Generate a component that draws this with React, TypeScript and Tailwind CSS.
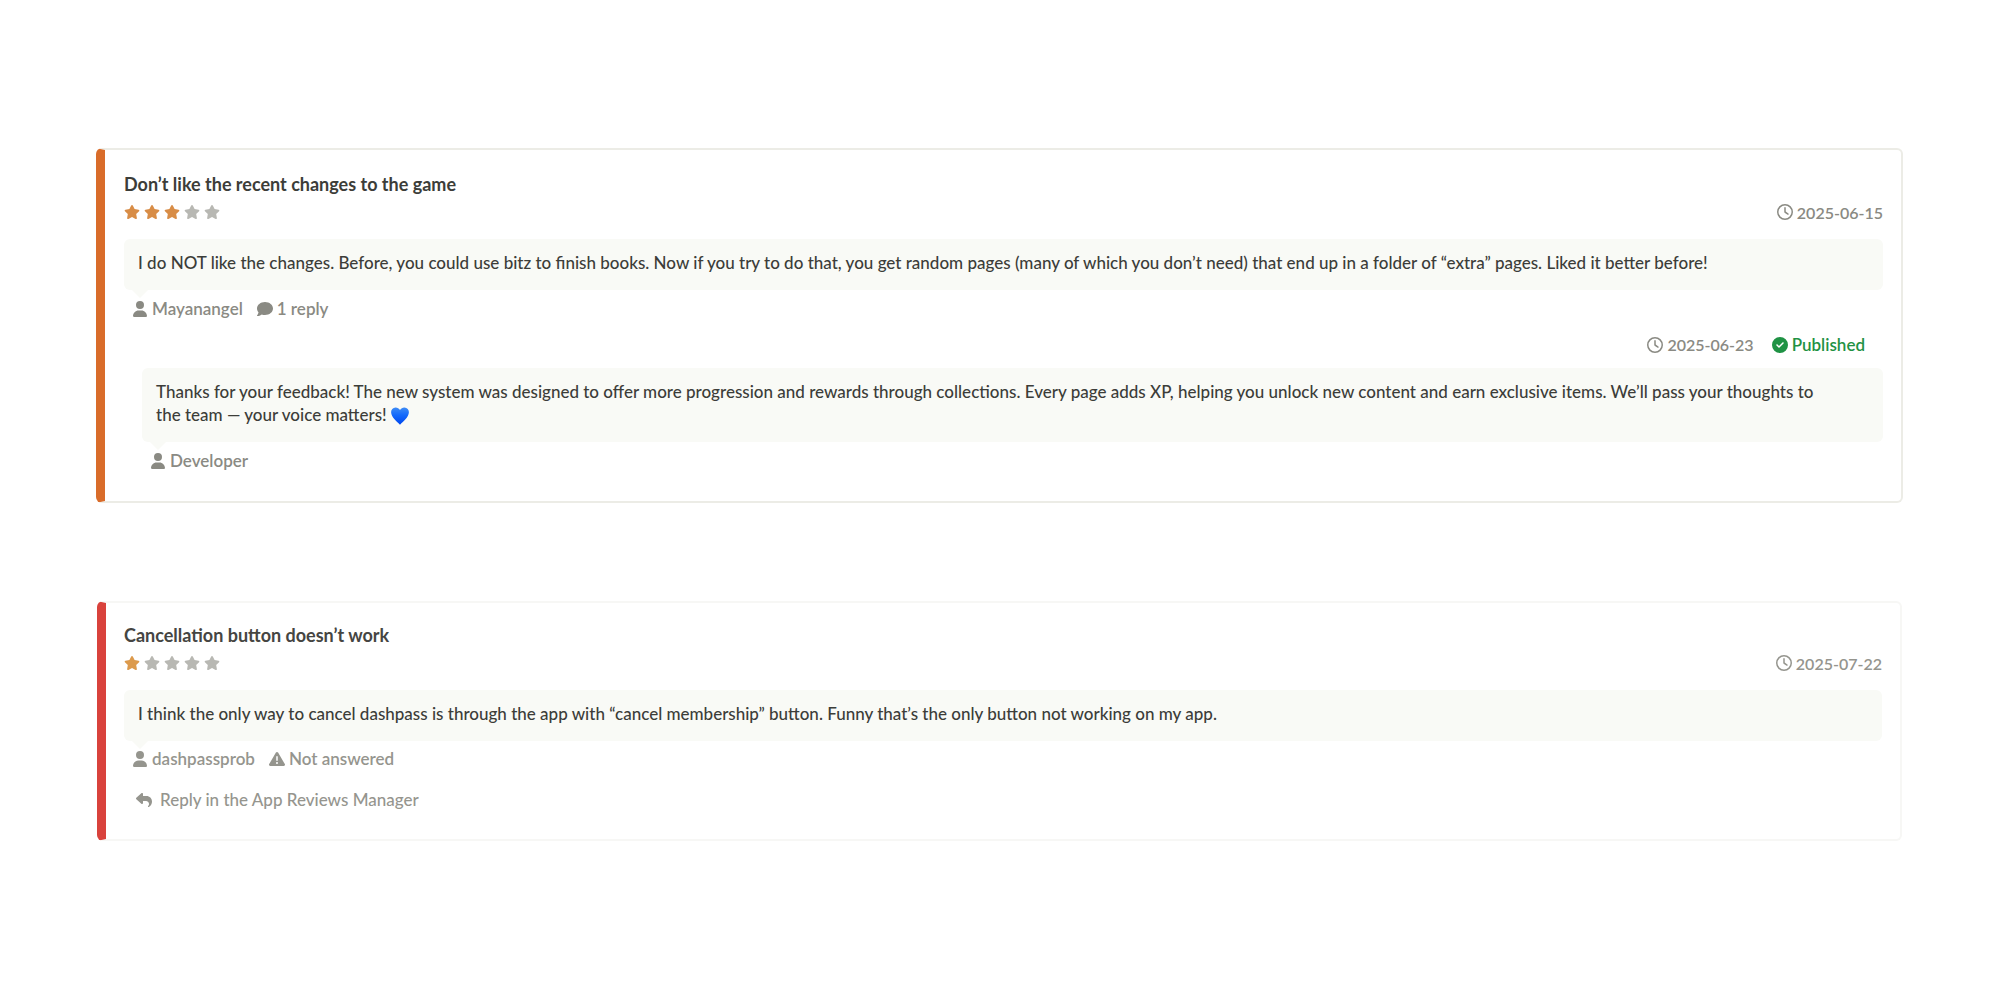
import { ReactNode } from "react";
import {
  FaCircleCheck,
  FaComment,
  FaRegClock,
  FaReply,
  FaStar,
  FaTriangleExclamation,
  FaUser,
} from "react-icons/fa6";

const BlueHeart = () => (
  <svg
    viewBox="0 0 18 18"
    role="img"
    aria-label="blue heart"
    className="inline-block size-[18px] align-[-4px]"
  >
    <defs>
      <linearGradient id="heart" x1="0" y1="0" x2="0" y2="1">
        <stop offset="0" stopColor="#3f8cf5" />
        <stop offset="0.45" stopColor="#1469fb" />
        <stop offset="1" stopColor="#0046ee" />
      </linearGradient>
    </defs>
    <path
      fill="url(#heart)"
      d="M9 3.1C7.9 1.2 6.3 .3 4.5 .4 1.9 .5 0 2.5 .1 5.3 .3 10.2 5.5 14.2 9 17.7c3.5-3.5 8.700-7.500 8.900-12.400C18 2.5 16.1 .5 13.5 .4 11.7 .3 10.1 1.2 9 3.1z"
    />
  </svg>
);

const Stars = ({ rating, color }: { rating: number; color: string }) => (
  <div className="flex gap-1" role="img" aria-label={`${rating} out of 5`}>
    {[1, 2, 3, 4, 5].map((star) => (
      <FaStar
        key={star}
        className={`size-4 ${star <= rating ? color : "text-[#b8b8b3]"}`}
      />
    ))}
  </div>
);

const Bubble = ({ children }: { children: ReactNode }) => (
  <div className="relative rounded-md bg-[#f9faf6] pt-3 pr-12 pb-4 pl-[14px] text-[#3c3d39]">
    <p>{children}</p>
    <span className="absolute top-full left-2 border-x-8 border-t-8 border-x-transparent border-t-[#f9faf6]" />
  </div>
);

const Meta = ({ icon, children }: { icon: ReactNode; children: ReactNode }) => (
  <span className="flex items-center gap-1 font-semibold">
    {icon}
    {children}
  </span>
);

const ReviewDate = ({ date }: { date: string }) => (
  <Meta icon={<FaRegClock className="size-4" />}>
    <time dateTime={date} className="text-base leading-[23px]">
      {date}
    </time>
  </Meta>
);

interface ReviewCardProps {
  title: string;
  date: string;
  rating: number;
  starColor: string;
  className: string;
  children: ReactNode;
}

const ReviewCard = (props: ReviewCardProps) => {
  const { title, date, rating, starColor, className, children } = props;

  return (
    <article
      className={`rounded-md border-2 border-l-[9px] pr-[18px] ${className}`}
    >
      <h2 className="text-lg leading-[23px] font-bold">{title}</h2>
      <div className="mb-[11px] flex h-8 items-center justify-between">
        <Stars rating={rating} color={starColor} />
        <ReviewDate date={date} />
      </div>
      {children}
    </article>
  );
};

export default function App() {
  return (
    <main className="flex flex-col gap-[98px] bg-white px-24 py-[148px] font-[Lato,sans-serif] text-[17px] leading-[23px] font-medium text-[#8a8a83]">
      <ReviewCard
        title="Don’t like the recent changes to the game"
        date="2025-06-15"
        rating={3}
        starColor="text-[#d88d47]"
        className="border-[#ecece6] border-l-[#d96c2a] pt-[23px] pb-[29px] pl-[19px] [&>h2]:text-[#3c3d39]"
      >
        <Bubble>
          I do NOT like the changes. Before, you could use bitz to finish books.
          Now if you try to do that, you get random pages (many of which you
          don’t need) that end up in a folder of “extra” pages. Liked it better
          before!
        </Bubble>
        <div className="flex gap-[14px] px-2 pt-[7px]">
          <Meta icon={<FaUser className="size-4" />}>Mayanangel</Meta>
          <Meta icon={<FaComment className="size-4" />}>1 reply</Meta>
        </div>
        <div className="pt-[13px] pl-[18px]">
          <div className="mb-3 flex justify-end gap-[18px] pr-[18px]">
            <ReviewDate date="2025-06-23" />
            <span className="text-[#1f9244]">
              <Meta icon={<FaCircleCheck className="size-4" />}>Published</Meta>
            </span>
          </div>
          <Bubble>
            Thanks for your feedback! The new system was designed to offer more
            progression and rewards through collections. Every page adds XP,
            helping you unlock new content and earn exclusive items. We’ll pass
            your thoughts to the team — your voice matters! <BlueHeart />
          </Bubble>
          <div className="flex px-2 pt-[7px]">
            <Meta icon={<FaUser className="size-4" />}>Developer</Meta>
          </div>
        </div>
      </ReviewCard>

      <ReviewCard
        title="Cancellation button doesn’t work"
        date="2025-07-22"
        rating={1}
        starColor="text-[#dc9a4c]"
        className="mx-px border-[#f7f7f5] border-l-[#d9423c] pt-[21px] pb-[26px] pl-[18px] text-[#95958e] [&>h2]:text-[#454542]"
      >
        <Bubble>
          I think the only way to cancel dashpass is through the app with
          “cancel membership” button. Funny that’s the only button not working
          on my app.
        </Bubble>
        <div className="flex gap-[14px] px-2 pt-[6px]">
          <Meta icon={<FaUser className="size-4" />}>dashpassprob</Meta>
          <Meta icon={<FaTriangleExclamation className="size-4" />}>
            Not answered
          </Meta>
        </div>
        <a
          href="#reply"
          className="mt-[18px] ml-3 inline-flex items-center gap-2"
        >
          <FaReply className="size-4" />
          Reply in the App Reviews Manager
        </a>
      </ReviewCard>
    </main>
  );
}
